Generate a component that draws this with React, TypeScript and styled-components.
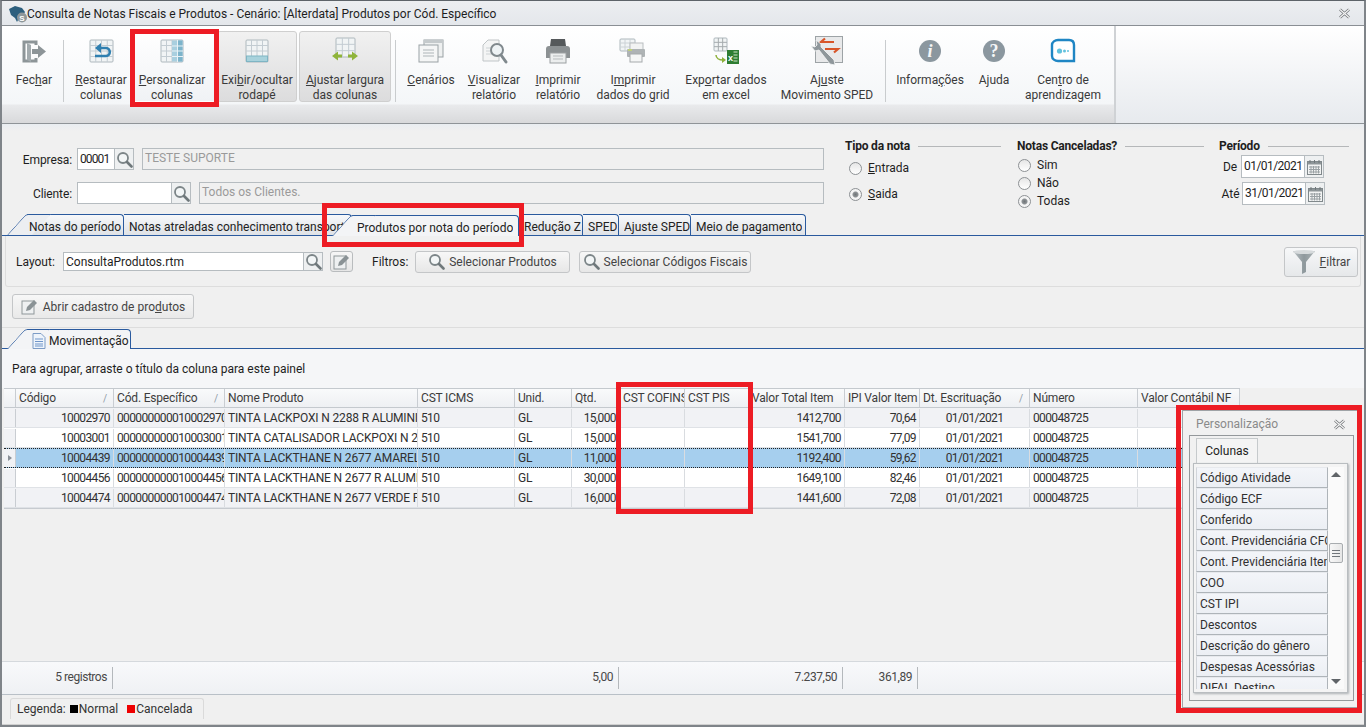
import * as React from 'react';
import styled, { createGlobalStyle } from 'styled-components';

const COLS = '12px 98px 111px 193px 97px 57px 48px 65px 64px 96px 75px 110px 108px 102px';

interface RowData {
    cod: string;
    esp: string;
    nome: string;
    qtd: string;
    total: string;
    ipi: string;
}

const ROWS: RowData[] = [
    { cod: '10002970', esp: '000000000010002970', nome: 'TINTA LACKPOXI N 2288 R ALUMINIO', qtd: '15,000', total: '1412,700', ipi: '70,64' },
    { cod: '10003001', esp: '000000000010003001', nome: 'TINTA CATALISADOR LACKPOXI N 2288', qtd: '15,000', total: '1541,700', ipi: '77,09' },
    { cod: '10004439', esp: '000000000010004439', nome: 'TINTA LACKTHANE N 2677 AMARELO', qtd: '11,000', total: '1192,400', ipi: '59,62' },
    { cod: '10004456', esp: '000000000010004456', nome: 'TINTA LACKTHANE N 2677 R ALUMINIO', qtd: '30,000', total: '1649,100', ipi: '82,46' },
    { cod: '10004474', esp: '000000000010004474', nome: 'TINTA LACKTHANE N 2677 VERDE PINO', qtd: '16,000', total: '1441,600', ipi: '72,08' },
];

const COLUMN_CHOICES = [
    'Código Atividade', 'Código ECF', 'Conferido', 'Cont. Previdenciária CFOP', 'Cont. Previdenciária Item',
    'COO', 'CST IPI', 'Descontos', 'Descrição do gênero', 'Despesas Acessórias', 'DIFAL Destino',
];

/** icons */

const GridLines = ({ x, y, w, h, cols, rows, color = '#c3ccd2' }: { x: number; y: number; w: number; h: number; cols: number; rows: number; color?: string }) => (
    <g stroke={color} strokeWidth="1" fill="none">
        <rect x={x} y={y} width={w} height={h} rx="1" fill="#f1f4f5" stroke="#aeb8bd" />
        {Array.from({ length: cols - 1 }, (_, i) => {
            const lx = x + (w / cols) * (i + 1);
            return <line key={i} x1={lx} y1={y} x2={lx} y2={y + h} />;
        })}
        {Array.from({ length: rows - 1 }, (_, i) => {
            const ly = y + (h / rows) * (i + 1);
            return <line key={i} x1={x} y1={ly} x2={x + w} y2={ly} />;
        })}
    </g>
);

const IconBox = ({ children }: { children: React.ReactNode }) => (
    <svg width="28" height="28" viewBox="0 0 28 28">{children}</svg>
);

const ExitIcon = () => (
    <IconBox>
        <path d="M16 8V5H4v19h12v-3" fill="none" stroke="#8d9598" strokeWidth="3" />
        <path d="M7 6l4 2v17l-4-2z" fill="#a3abae" />
        <path d="M12 12h6V8l8 6.500-8 6.500v-4h-6z" fill="#8d9598" />
    </IconBox>
);

const RestoreIcon = () => (
    <IconBox>
        <GridLines x={3} y={3} w={23} h={22} cols={4} rows={4} />
        <path d="M8 19h11c5 0 5-8 0-8h-7" fill="none" stroke="#2f7fb0" strokeWidth="2.600" />
        <path d="M14 6l-6 5 6 5z" fill="#2f7fb0" />
    </IconBox>
);

const CustomizeIcon = () => (
    <IconBox>
        <GridLines x={3} y={3} w={22} h={22} cols={4} rows={4} />
        <rect x="14" y="3.500" width="10.500" height="21" fill="#a9cfdf" />
        <rect x="19.500" y="3.500" width="5" height="21" fill="#7db4cb" />
        <path d="M14 9h11M14 14h11M14 19.500h11M19.500 3v22" stroke="#e8f2f6" fill="none" />
    </IconBox>
);

const FooterIcon = () => (
    <IconBox>
        <GridLines x={3} y={3} w={22} h={22} cols={4} rows={4} />
        <rect x="3.500" y="19" width="21" height="5.500" fill="#a8d2dc" stroke="#7fb5c4" />
    </IconBox>
);

const FitIcon = () => (
    <IconBox>
        <GridLines x={5} y={1} w={19} h={19} cols={3} rows={3} />
        <path d="M1 19l6-4.500v9zM27 19l-6-4.500v9z" fill="#8fb43a" />
        <path d="M6 17.500h5v3H6zM17 17.500h5v3h-5z" fill="#8fb43a" />
    </IconBox>
);

const ScenarioIcon = () => (
    <IconBox>
        <rect x="7" y="3" width="19" height="17" fill="#eef0f0" stroke="#9aa2a5" />
        <rect x="7" y="3" width="19" height="3" fill="#c5cacc" />
        <rect x="2" y="8" width="19" height="17" fill="#f5f6f6" stroke="#9aa2a5" />
        <path d="M6 13h11M6 16h11M6 19h11" stroke="#aeb5b8" />
    </IconBox>
);

const PreviewIcon = () => (
    <IconBox>
        <path d="M3 8l5-5h11v21H3z" fill="#f4f5f5" stroke="#c0c5c7" />
        <path d="M6 11h7M6 14h6M6 17h7" stroke="#cdd2d4" />
        <circle cx="17" cy="13" r="6" fill="#eef3f5" stroke="#80898d" strokeWidth="2" />
        <path d="M21 18l5 7" stroke="#80898d" strokeWidth="3" strokeLinecap="round" />
    </IconBox>
);

const PrinterIcon = () => (
    <IconBox>
        <path d="M7 2h14l1 7H6z" fill="#55595b" />
        <path d="M2 12c0-2 1-3 3-3h18c2 0 3 1 3 3v9H2z" fill="#8c9193" />
        <rect x="6" y="16" width="16" height="10" fill="#eceeee" stroke="#9ba0a2" />
        <path d="M9 19h10M9 22h10" stroke="#b7bbbd" />
    </IconBox>
);

const PrintGridIcon = () => (
    <IconBox>
        <GridLines x={1} y={2} w={15} h={12} cols={3} rows={3} color="#ccd2d6" />
        <rect x="11" y="6" width="13" height="8" fill="#f2f3f3" stroke="#b9bec0" />
        <rect x="8" y="12" width="18" height="8" rx="1" fill="#aeb3b5" />
        <rect x="11" y="17" width="12" height="8" fill="#f5f6f6" stroke="#a5aaac" />
        <path d="M9 13h4" stroke="#c4d96a" strokeWidth="1.500" />
    </IconBox>
);

const ExcelIcon = () => (
    <IconBox>
        <GridLines x={2} y={1} w={13} h={13} cols={3} rows={3} color="#a5abae" />
        <path d="M4 18c0 3 3 5 7 5" fill="none" stroke="#8db03a" strokeWidth="1.500" />
        <path d="M10 20l4 3-4 3z" fill="#8db03a" />
        <rect x="15" y="13" width="12" height="14" fill="#2e7d32" />
        <path d="M21.500 15h4M21.500 18h4M21.500 21h4M21.500 24h4" stroke="#cfe6c8" />
        <text x="16" y="24" fontSize="9" fontWeight="700" fill="#ffffff" fontFamily="'Liberation Sans', sans-serif">x</text>
    </IconBox>
);

const SpedIcon = () => (
    <svg width="34" height="30" viewBox="0 0 34 30">
        <rect x="5.500" y="0.500" width="27" height="26" fill="#e8e9ea" stroke="#9da3a6" />
        <path d="M16 6h-5l4-3.500M11 6h13M22 13h6l-4 3.500M28 13H15" fill="none" stroke="#d8562a" strokeWidth="2.200" />
        <path d="M1 10l4 5 4-1 11 14 5 1-1-5-13-13 0-3-5-4 1 5-2 2z" fill="#8f979b" stroke="#f4f5f5" strokeWidth="0.800" />
    </svg>
);

const RoundIcon = ({ glyph, italic }: { glyph: string; italic?: boolean }) => (
    <IconBox>
        <circle cx="14" cy="14" r="11" fill="#8b979f" />
        <text x="14" y="20" textAnchor="middle" fontSize="18" fontWeight="700" fontStyle={italic ? 'italic' : 'normal'} fill="#f5f6f7" fontFamily="'Liberation Serif', serif">{glyph}</text>
    </IconBox>
);

const LearnIcon = () => (
    <IconBox>
        <path d="M9 3h11c3 0 5 2 5 5v16H9c-3 0-6-2-6-5V8c0-3 3-5 6-5z" fill="#ffffff" stroke="#1f86c4" strokeWidth="2.400" />
        <circle cx="10.500" cy="14" r="2.600" fill="#62c2de" />
        <circle cx="15.500" cy="14" r="1.500" fill="#62c2de" />
        <circle cx="19" cy="14" r="1" fill="#62c2de" />
    </IconBox>
);

const CloseIcon = () => (
    <svg width="13" height="11" viewBox="0 0 13 11">
        <path d="M2 1.500l9 8M11 1.500l-9 8" stroke="#6a6e71" strokeWidth="2.600" />
        <path d="M2 1.500l9 8M11 1.500l-9 8" stroke="#f4f4f4" strokeWidth="1.300" />
    </svg>
);

const LensIcon = () => (
    <svg width="17" height="17" viewBox="0 0 17 17">
        <circle cx="7" cy="7" r="5" fill="#f3f6f7" stroke="#7c8588" strokeWidth="1.800" />
        <path d="M11 11l4.500 4.500" stroke="#6f787b" strokeWidth="2.600" strokeLinecap="round" />
    </svg>
);

const CalendarIcon = () => (
    <svg width="15" height="16" viewBox="0 0 15 16">
        <rect x="0.500" y="2.500" width="14" height="13" fill="#f2f3f3" stroke="#80888b" />
        <rect x="1" y="3" width="13" height="2.500" fill="#8d9598" />
        <path d="M3 1v3M7.500 1v3M12 1v3" stroke="#70787b" />
        <path d="M2 8h11M2 10.500h11M2 13h11M4 7v7.500M6.500 7v7.500M9 7v7.500M11.500 7v7.500" stroke="#9aa1a4" />
    </svg>
);

const EditIcon = () => (
    <svg width="18" height="17" viewBox="0 0 18 17">
        <rect x="1" y="3" width="12" height="13" fill="#eef0f1" stroke="#8f979a" />
        <path d="M6 9l7-7 3 3-7 7-4 1z" fill="#8a9295" />
    </svg>
);

const FunnelIcon = () => (
    <svg width="24" height="25" viewBox="0 0 24 25">
        <defs>
            <linearGradient id="funnel" x1="0" x2="1" y1="0" y2="0">
                <stop offset="0" stopColor="#b8c0c3" />
                <stop offset="0.5" stopColor="#8e989c" />
                <stop offset="1" stopColor="#aab2b5" />
            </linearGradient>
        </defs>
        <path d="M1 2h22L14 13v10l-4 2V13z" fill="url(#funnel)" />
        <ellipse cx="12" cy="3" rx="11" ry="2" fill="#d6dadc" />
    </svg>
);

const DocIcon = () => (
    <svg width="14" height="16" viewBox="0 0 14 16">
        <path d="M1 .5h8l4 4v11H1z" fill="#eef4fb" stroke="#7d9cc6" />
        <path d="M3 6h8M3 8.500h8M3 11h8M3 13h8" stroke="#6f95c9" />
    </svg>
);

/** page */

export default function App() {
    return (
        <>
            <GlobalStyle />
            <Window>
                <TitleBar>
                    <AppLogo width="22" height="18" viewBox="0 0 22 18">
                        <path d="M1 4l6-3 7 2 3 4-3 5-3 1-2 4-2-4-4-3z" fill="#2d5f7e" />
                        <circle cx="14" cy="12.500" r="5" fill="#8d979b" />
                        <text x="14" y="15.500" textAnchor="middle" fontSize="8" fontWeight="700" fill="#fff" fontFamily="'Liberation Sans', sans-serif">S</text>
                    </AppLogo>
                    <TitleText>Consulta de Notas Fiscais e Produtos - Cenário: [Alterdata] Produtos por Cód. Específico</TitleText>
                    <CloseIcon />
                </TitleBar>

                <Toolbar>
                    <Ribbon>
                        <ToolButton $w={58} $ml={3}><IconSlot><ExitIcon /></IconSlot><span>Fec<u>h</u>ar</span></ToolButton>
                        <ToolSep />
                        <ToolButton $w={58} $ml={8}><IconSlot><RestoreIcon /></IconSlot><span><u>R</u>estaurar</span><span>colunas</span></ToolButton>
                        <ToolButton $w={84} $active><IconSlot><CustomizeIcon /></IconSlot><span><u>P</u>ersonalizar</span><span>colunas</span></ToolButton>
                        <ToolButton $w={80} $ml={3} $pressed><IconSlot><FooterIcon /></IconSlot><span>Exi<u>b</u>ir/ocultar</span><span>rodapé</span></ToolButton>
                        <ToolButton $w={92} $ml={2} $pressed><IconSlot><FitIcon /></IconSlot><span><u>A</u>justar largura</span><span>das colunas</span></ToolButton>
                        <ToolSep $ml={4} />
                        <ToolButton $w={70}><IconSlot><ScenarioIcon /></IconSlot><span><u>C</u>enários</span></ToolButton>
                        <ToolButton $w={56}><IconSlot><PreviewIcon /></IconSlot><span><u>V</u>isualizar</span><span>relatório</span></ToolButton>
                        <ToolButton $w={72}><IconSlot><PrinterIcon /></IconSlot><span><u>I</u>mprimir</span><span>relatório</span></ToolButton>
                        <ToolButton $w={78}><IconSlot><PrintGridIcon /></IconSlot><span>I<u>m</u>primir</span><span>dados do grid</span></ToolButton>
                        <ToolButton $w={108}><IconSlot><ExcelIcon /></IconSlot><span>Exp<u>o</u>rtar dados</span><span>em excel</span></ToolButton>
                        <ToolButton $w={94}><IconSlot><SpedIcon /></IconSlot><span>Aj<u>u</u>ste</span><span>Movimento SPED</span></ToolButton>
                        <ToolSep $ml={11} />
                        <ToolButton $w={88}><IconSlot><RoundIcon glyph="i" italic /></IconSlot><span>Informa<u>ç</u>ões</span></ToolButton>
                        <ToolButton $w={40}><IconSlot><RoundIcon glyph="?" /></IconSlot><span>A<u>j</u>uda</span></ToolButton>
                        <ToolButton $w={98}><IconSlot><LearnIcon /></IconSlot><span>Cen<u>t</u>ro de</span><span>aprendizagem</span></ToolButton>
                    </Ribbon>
                </Toolbar>

                <FilterArea>
                    <ClientColumn>
                        <FieldRow>
                            <FieldLabel>Empresa:</FieldLabel>
                            <TextBox $w={37} $num>00001</TextBox>
                            <Lookup><LensIcon /></Lookup>
                            <ReadOnlyBox>TESTE SUPORTE</ReadOnlyBox>
                        </FieldRow>
                        <FieldRow>
                            <FieldLabel>Cliente:</FieldLabel>
                            <TextBox $w={94} />
                            <Lookup><LensIcon /></Lookup>
                            <ReadOnlyBox>Todos os Clientes.</ReadOnlyBox>
                        </FieldRow>
                    </ClientColumn>

                    <Group $ml={21} $w={156}>
                        <GroupTitle>Tipo da nota<GroupLine /></GroupTitle>
                        <RadioList $top={5} $gap={8} $indent={4}>
                            <Radio><RadioDot /><span><u>E</u>ntrada</span></Radio>
                            <Radio><RadioDot $on /><span><u>S</u>aida</span></Radio>
                        </RadioList>
                    </Group>

                    <Group $ml={16} $w={187}>
                        <GroupTitle>Notas Canceladas?<GroupLine /></GroupTitle>
                        <RadioList $top={2} $gap={0} $indent={1}>
                            <Radio><RadioDot /><span>Sim</span></Radio>
                            <Radio><RadioDot /><span>Não</span></Radio>
                            <Radio><RadioDot $on /><span>Todas</span></Radio>
                        </RadioList>
                    </Group>

                    <Group $ml={15} $w={130}>
                        <GroupTitle>Período<GroupLine /></GroupTitle>
                        <DateList>
                            <DateRow>
                                <DateLabel $w={22}>De</DateLabel>
                                <DateBox>01/01/2021</DateBox>
                                <Lookup $h={23}><CalendarIcon /></Lookup>
                            </DateRow>
                            <DateRow>
                                <DateLabel $w={23}>Até</DateLabel>
                                <DateBox>31/01/2021</DateBox>
                                <Lookup $h={23}><CalendarIcon /></Lookup>
                            </DateRow>
                        </DateList>
                    </Group>
                </FilterArea>

                <TabRow>
                    <Tab $slant $w={97}><span>Notas do período</span></Tab>
                    <Tab $w={228}><span>Notas atreladas conhecimento transporte</span></Tab>
                    <Tab $slant $current $w={167}><span>Produtos por nota do período</span></Tab>
                    <Tab $w={64}><span>Redução Z</span></Tab>
                    <Tab $w={36}><span>SPED</span></Tab>
                    <Tab $w={72}><span>Ajuste SPED</span></Tab>
                    <Tab $w={115}><span>Meio de pagamento</span></Tab>
                </TabRow>

                <LayoutPanel>
                    <LayoutLabel>Layout:</LayoutLabel>
                    <TextBox $w={240} $h={19}>ConsultaProdutos.rtm</TextBox>
                    <Lookup $h={19}><LensIcon /></Lookup>
                    <SmallIconButton><EditIcon /></SmallIconButton>
                    <FiltersLabel>Filtros:</FiltersLabel>
                    <FilterButton $w={155}><LensIcon /><span>Selecionar Produtos</span></FilterButton>
                    <FilterButton $w={172} $ml={9}><LensIcon /><span>Selecionar Códigos Fiscais</span></FilterButton>
                    <ApplyButton><FunnelIcon /><span><u>F</u>iltrar</span></ApplyButton>
                </LayoutPanel>

                <ActionRow>
                    <OpenButton><EditIcon /><span>Abrir cadastro de pro<u>d</u>utos</span></OpenButton>
                </ActionRow>

                <SubTabRow>
                    <Tab $slant $current $w={104} $h={20}><DocIcon /><span>Movimentação</span></Tab>
                </SubTabRow>

                <GroupHint>Para agrupar, arraste o título da coluna para este painel</GroupHint>

                <GridArea>
                    <DataGrid>
                        <GridRow $head>
                            <HeadCell />
                            <HeadCell>Código<SortMark>/</SortMark></HeadCell>
                            <HeadCell>Cód. Específico<SortMark>/</SortMark></HeadCell>
                            <HeadCell>Nome Produto</HeadCell>
                            <HeadCell>CST ICMS</HeadCell>
                            <HeadCell>Unid.</HeadCell>
                            <HeadCell>Qtd.</HeadCell>
                            <HeadCell>CST COFINS</HeadCell>
                            <HeadCell>CST PIS</HeadCell>
                            <HeadCell>Valor Total Item</HeadCell>
                            <HeadCell>IPI Valor Item</HeadCell>
                            <HeadCell>Dt. Escrituação<SortMark>/</SortMark></HeadCell>
                            <HeadCell>Número</HeadCell>
                            <HeadCell>Valor Contábil NF</HeadCell>
                        </GridRow>
                        {ROWS.map((row, i) => (
                            <GridRow key={row.cod} $stripe={i % 2 === 0} $selected={i === 2}>
                                <MarkerCell>{i === 2 && <RowArrow />}</MarkerCell>
                                <NumCell $right>{row.cod}</NumCell>
                                <NumCell>{row.esp}</NumCell>
                                <Cell>{row.nome}</Cell>
                                <NumCell>510</NumCell>
                                <Cell>GL</Cell>
                                <NumCell $right>{row.qtd}</NumCell>
                                <Cell />
                                <Cell />
                                <NumCell $right>{row.total}</NumCell>
                                <NumCell $right>{row.ipi}</NumCell>
                                <NumCell $center>01/01/2021</NumCell>
                                <NumCell>000048725</NumCell>
                                <Cell />
                            </GridRow>
                        ))}
                    </DataGrid>
                </GridArea>

                <FooterBar>
                    <FootCell $w={111}>5 registros</FootCell>
                    <FootCell $w={506}>5,00</FootCell>
                    <FootCell $w={224}>7.237,50</FootCell>
                    <FootCell $w={75}>361,89</FootCell>
                </FooterBar>

                <LegendRow>
                    <LegendTab>
                        Legenda:
                        <LegendSwatch $color="#000000" />Normal
                        <LegendSwatch $color="#ee0000" $ml={9} />Cancelada
                    </LegendTab>
                </LegendRow>

                <FloatPanel>
                    <FloatHead>
                        <span>Personalização</span>
                        <CloseIcon />
                    </FloatHead>
                    <FloatFrame>
                        <FloatTab>Colunas</FloatTab>
                        <FloatBody>
                            <ChoiceList>
                                {COLUMN_CHOICES.map(name => <Choice key={name}>{name}</Choice>)}
                            </ChoiceList>
                            <ScrollBar>
                                <ScrollArrow />
                                <ScrollThumb />
                                <ScrollArrow $down />
                            </ScrollBar>
                        </FloatBody>
                    </FloatFrame>
                </FloatPanel>

                <RedMark $x={130} $y={29} $w={89} $h={78} />
                <RedMark $x={322} $y={203} $w={202} $h={44} />
                <RedMark $x={616} $y={382} $w={137} $h={132} />
                <RedMark $x={1176} $y={405} $w={186} $h={308} />
            </Window>
        </>
    );
}

/** styling */

const GlobalStyle = createGlobalStyle`
    html, body {
        margin: 0;
        padding: 0;
        overflow: hidden;
    }

    body {
        font-family: Roboto, "Noto Sans", sans-serif;
        font-size: 12px;
        color: #1e1e1e;
    }

    u {
        text-underline-offset: 1px;
    }
`;

const Window = styled.div`
    position: relative;
    box-sizing: border-box;
    display: flex;
    flex-direction: column;
    width: 1366px;
    height: 727px;
    overflow: hidden;
    background: #f0f0f0;
    border-top: 1px solid #5d6369;
    border-left: 2px solid #7f8489;
    border-right: 2px solid #7f8489;
    border-bottom: 2px solid #7f8489;
`;

const TitleBar = styled.div`
    display: flex;
    align-items: center;
    flex: none;
    box-sizing: content-box;
    height: 23px;
    padding: 1px 13px 0 6px;
    background: linear-gradient(#eceef1, #e4e7eb);
    border-bottom: 1px solid #8a8f94;
`;

const AppLogo = styled.svg`
    flex: none;
    margin-right: -3px;
`;

const TitleText = styled.div`
    flex: 1;
    white-space: nowrap;
`;

const Toolbar = styled.div`
    flex: none;
    height: 97px;
    background: linear-gradient(#ffffff, #e7eaee);
    border-bottom: 1px solid #8f9498;
`;

const Ribbon = styled.div`
    box-sizing: border-box;
    display: flex;
    align-items: flex-start;
    width: 1114px;
    height: 100%;
    padding-top: 5px;
    border-right: 2px solid #cfd2d5;
    background: linear-gradient(#ffffff 0, #f4f6f8 78px, #e9eaec 79px, #d9dadc 96px);
`;

const ToolButton = styled.div<{ $w: number; $ml?: number; $pressed?: boolean; $active?: boolean }>`
    box-sizing: border-box;
    display: flex;
    flex-direction: column;
    align-items: center;
    flex: none;
    width: ${props => props.$w}px;
    height: 71px;
    margin-left: ${props => props.$ml ?? 0}px;
    line-height: 15px;
    white-space: nowrap;
    color: #3a3a3a;
    border-radius: 3px;
    border: 1px solid ${props => props.$pressed ? '#cfcfcf' : 'transparent'};
    background: ${props => props.$pressed
        ? 'linear-gradient(#f1f1f1, #dcdcdd)'
        : props.$active ? 'linear-gradient(#ffffff, #f0f2f5)' : 'transparent'};
`;

const IconSlot = styled.div`
    display: flex;
    align-items: center;
    justify-content: center;
    height: 28px;
    margin-top: 5px;
    margin-bottom: 8px;
`;

const ToolSep = styled.div<{ $ml?: number }>`
    flex: none;
    width: 1px;
    height: 62px;
    margin: 9px 0 0 ${props => props.$ml ?? 0}px;
    background: #c9ccce;
`;

const FilterArea = styled.div`
    display: flex;
    align-items: flex-start;
    flex: none;
    height: 90px;
    background: linear-gradient(#e9edf1, #f0f0f0 7px);
`;

const ClientColumn = styled.div`
    display: flex;
    flex-direction: column;
    gap: 12px;
    flex: none;
    width: 822px;
    padding-top: 24px;
`;

const FieldRow = styled.div`
    display: flex;
    align-items: center;
`;

const FieldLabel = styled.div`
    width: 70px;
    margin: 2px 5px 0 0;
    text-align: right;
    letter-spacing: -.1px;
`;

const TextBox = styled.div<{ $w: number; $h?: number; $num?: boolean }>`
    box-sizing: border-box;
    flex: none;
    width: ${props => props.$w}px;
    height: ${props => props.$h ?? 22}px;
    padding: 0 2px;
    line-height: ${props => (props.$h ?? 22) - 1}px;
    letter-spacing: ${props => props.$num ? '-.9px' : '0'};
    background: #ffffff;
    border: 1px solid #b6bcc0;
    border-right: none;
    white-space: nowrap;
`;

const Lookup = styled.div<{ $h?: number }>`
    box-sizing: border-box;
    display: flex;
    align-items: center;
    justify-content: center;
    flex: none;
    width: 20px;
    height: ${props => props.$h ?? 22}px;
    background: #eef0f1;
    border: 1px solid #b6bcc0;
`;

const ReadOnlyBox = styled.div`
    box-sizing: border-box;
    flex: 1;
    height: 22px;
    margin-left: 8px;
    padding: 0 2px;
    line-height: 19px;
    color: #9a9a9a;
    background: #f0f0f0;
    border: 1px solid #b6bcc0;
`;

const Group = styled.div<{ $ml: number; $w: number }>`
    flex: none;
    width: ${props => props.$w}px;
    margin: 14px 0 0 ${props => props.$ml}px;
`;

const GroupTitle = styled.div`
    display: flex;
    align-items: center;
    gap: 8px;
    height: 16px;
    font-weight: 700;
    white-space: nowrap;
    letter-spacing: -.2px;
`;

const GroupLine = styled.div`
    flex: 1;
    height: 1px;
    background: #b5b7b9;
`;

const RadioList = styled.div<{ $top: number; $gap: number; $indent: number }>`
    display: flex;
    flex-direction: column;
    gap: ${props => props.$gap}px;
    margin: ${props => props.$top}px 0 0 ${props => props.$indent}px;
`;

const Radio = styled.div`
    display: flex;
    align-items: center;
    gap: 6px;
    height: 18px;
`;

const RadioDot = styled.div<{ $on?: boolean }>`
    box-sizing: border-box;
    flex: none;
    width: 13px;
    height: 13px;
    border-radius: 50%;
    border: 1px solid #8d9194;
    background: ${props => props.$on
        ? 'radial-gradient(circle, #6f7477 0, #8f9396 2.500px, #f4f4f4 3.500px)'
        : 'linear-gradient(#e6e6e6, #ffffff)'};
`;

const DateList = styled.div`
    display: flex;
    flex-direction: column;
    gap: 4px;
    margin-top: 1px;
`;

const DateRow = styled.div`
    display: flex;
    align-items: center;
`;

const DateLabel = styled.div<{ $w: number }>`
    width: ${props => props.$w}px;
    text-align: center;
`;

const DateBox = styled.div`
    box-sizing: border-box;
    flex: none;
    width: 63px;
    height: 23px;
    padding: 0 2px;
    line-height: 20px;
    letter-spacing: -.55px;
    background: #ffffff;
    border: 1px solid #b6bcc0;
    border-right: none;
`;

const TabRow = styled.div`
    display: flex;
    align-items: flex-end;
    flex: none;
    box-sizing: border-box;
    height: 22px;
    padding-left: 25px;
    border-bottom: 1px solid #2a5a9e;
`;

const SubTabRow = styled(TabRow)`
    height: 21px;
`;

const Tab = styled.div<{ $slant?: boolean; $current?: boolean; $w?: number; $h?: number }>`
    position: relative;
    box-sizing: border-box;
    display: flex;
    align-items: center;
    gap: 3px;
    flex: none;
    width: ${props => props.$w ?? 100}px;
    height: ${props => props.$h ?? 21}px;
    margin-bottom: ${props => props.$current ? -1 : 0}px;
    padding: 3px 0 0 ${props => props.$slant && !props.$current ? 2 : 5}px;
    white-space: nowrap;
    color: #222222;
    border-top: 1px solid #2a5a9e;
    border-right: 1px solid #2a5a9e;
    border-top-right-radius: 4px;
    z-index: ${props => props.$current ? 2 : 1};
    background: ${props => props.$current ? '#f3f4f6' : 'linear-gradient(#f7f8fa, #dfe2e6)'};

    & > span {
        display: block;
        overflow: hidden;
    }

    ${props => props.$slant && `
        &::before {
            content: '';
            position: absolute;
            top: -1px;
            bottom: 0;
            left: -20px;
            width: 24px;
            z-index: -1;
            border-top: 1px solid #2a5a9e;
            border-left: 1px solid #2a5a9e;
            border-top-left-radius: 3px;
            transform: skewX(-42deg);
            transform-origin: bottom left;
            background: ${props.$current ? '#f3f4f6' : '#eceef1'};
        }
    `}
`;

const LayoutPanel = styled.div`
    box-sizing: border-box;
    display: flex;
    align-items: center;
    flex: none;
    height: 51px;
    margin: 0 3px 0 3px;
    padding: 1px 2px 0 10px;
    border: 1px solid #dddddd;
    border-top: none;
    border-radius: 0 0 3px 3px;
`;

const LayoutLabel = styled.div`
    width: 47px;
`;

const SmallIconButton = styled.div`
    box-sizing: border-box;
    display: flex;
    align-items: center;
    justify-content: center;
    flex: none;
    width: 23px;
    height: 21px;
    margin-left: 7px;
    background: linear-gradient(#f6f6f6, #e6e6e6);
    border: 1px solid #b9bcbe;
    border-radius: 3px;
`;

const FiltersLabel = styled.div`
    width: 43px;
    margin-left: 19px;
`;

const FilterButton = styled.div<{ $w: number; $ml?: number }>`
    box-sizing: border-box;
    display: flex;
    align-items: center;
    justify-content: center;
    gap: 4px;
    flex: none;
    width: ${props => props.$w}px;
    height: 22px;
    margin-left: ${props => props.$ml ?? 0}px;
    white-space: nowrap;
    color: #444444;
    background: linear-gradient(#f7f7f7, #e7e7e7);
    border: 1px solid #c4c6c8;
    border-radius: 3px;
`;

const ApplyButton = styled.div`
    box-sizing: border-box;
    display: flex;
    align-items: center;
    justify-content: center;
    gap: 4px;
    flex: none;
    width: 74px;
    height: 30px;
    margin-left: auto;
    color: #444444;
    background: linear-gradient(#f7f8f9, #e6e8ea);
    border: 1px solid #c4c6c8;
    border-radius: 3px;
`;

const ActionRow = styled.div`
    flex: none;
    height: 33px;
    padding: 7px 0 0 10px;
    border-bottom: 1px solid #dddddd;
`;

const OpenButton = styled.div`
    box-sizing: border-box;
    display: flex;
    align-items: center;
    justify-content: center;
    gap: 4px;
    width: 182px;
    height: 25px;
    white-space: nowrap;
    color: #444444;
    background: linear-gradient(#f7f7f7, #e9e9e9);
    border: 1px solid #c4c6c8;
    border-radius: 3px;
`;

const GroupHint = styled.div`
    flex: none;
    height: 39px;
    padding: 0 0 0 10px;
    line-height: 40px;
    background: #f5f6f8;
`;

const GridArea = styled.div`
    flex: 1;
    min-height: 0;
    padding-left: 2px;
`;

const DataGrid = styled.div`
    width: 1236px;
    border-bottom: 1px solid #c7cbd0;
`;

const GridRow = styled.div<{ $head?: boolean; $stripe?: boolean; $selected?: boolean }>`
    box-sizing: border-box;
    display: grid;
    grid-template-columns: ${COLS};
    height: 20px;
    border-top: 1px solid ${props => props.$head ? '#c4c9ce' : 'transparent'};
    border-bottom: ${props => props.$head ? '1px solid #c4c9ce' : '1px solid #dfe2e6'};
    background: ${props => {
        if (props.$head) return 'linear-gradient(#f9fafb, #eef0f3)';
        if (props.$selected) return '#a6cfee';
        return props.$stripe ? '#f1f2f5' : '#ffffff';
    }};
    ${props => props.$selected && `
        border-top: 1px dotted #222222;
        border-bottom: 1px dotted #222222;
    `}
`;

const HeadCell = styled.div`
    display: flex;
    justify-content: space-between;
    align-items: center;
    padding: 0 3px;
    overflow: hidden;
    white-space: nowrap;
    color: #3c3c3c;
    letter-spacing: -.18px;
    border-right: 1px solid #c9cdd2;
`;

const SortMark = styled.span`
    margin-right: 3px;
    font-size: 10px;
    color: #8f9aa5;
`;

const Cell = styled.div<{ $right?: boolean; $center?: boolean }>`
    padding: 0 3px;
    overflow: hidden;
    display: flex;
    align-items: center;
    justify-content: ${props => props.$right ? 'flex-end' : props.$center ? 'center' : 'flex-start'};
    white-space: nowrap;
    line-height: 18px;
    color: #303030;
    letter-spacing: -.15px;
    border-right: 1px solid #d9dce0;
`;

const NumCell = styled(Cell)`
    letter-spacing: -.62px;
`;

const MarkerCell = styled.div`
    display: flex;
    align-items: center;
    justify-content: center;
    background: #f1f2f5;
    border-right: 1px solid #c9cdd2;
`;

const RowArrow = styled.div`
    width: 0;
    height: 0;
    border-left: 4px solid #8a9097;
    border-top: 3px solid transparent;
    border-bottom: 3px solid transparent;
`;

const FooterBar = styled.div`
    box-sizing: border-box;
    display: flex;
    flex: none;
    height: 34px;
    padding: 5px 0;
    background: linear-gradient(#f8f9fb, #eff1f4);
    border-top: 1px solid #d5d9dd;
    border-bottom: 1px solid #b9c0c7;
`;

const FootCell = styled.div<{ $w: number }>`
    box-sizing: border-box;
    flex: none;
    width: ${props => props.$w}px;
    padding-right: 5px;
    text-align: right;
    line-height: 21px;
    color: #484848;
    letter-spacing: -.45px;
    border-right: 1px solid #b4b8bc;
`;

const LegendRow = styled.div`
    flex: none;
    box-sizing: border-box;
    height: 30px;
    padding: 3px 0 0 8px;
    border-bottom: 1px solid #d0d0d0;
`;

const LegendTab = styled.div`
    box-sizing: border-box;
    display: flex;
    align-items: center;
    width: 194px;
    height: 21px;
    padding-left: 6px;
    color: #333333;
    white-space: nowrap;
    border: 1px solid #dadada;
    border-bottom: none;
    border-radius: 3px 3px 0 0;
`;

const LegendSwatch = styled.span<{ $color: string; $ml?: number }>`
    width: 8px;
    height: 8px;
    margin: 0 1px 0 ${props => props.$ml ?? 4}px;
    background: ${props => props.$color};
`;

const FloatPanel = styled.div`
    position: absolute;
    top: 409px;
    left: 1180px;
    box-sizing: border-box;
    width: 178px;
    height: 298px;
    padding: 0 5px 3px 6px;
    background: #f1f1f1;
    border: 1px solid #9fa3a6;
    z-index: 5;
`;

const FloatHead = styled.div`
    display: flex;
    align-items: center;
    justify-content: space-between;
    height: 24px;
    padding: 2px 8px 0 7px;
    box-sizing: border-box;
    color: #8a8a8a;
`;

const FloatFrame = styled.div`
    box-sizing: border-box;
    height: 266px;
    padding: 2px 5px 0 3px;
    background: #f1f1f1;
    border: 1px solid #94989b;
`;

const FloatTab = styled.div`
    box-sizing: border-box;
    width: 62px;
    height: 25px;
    margin-left: 3px;
    line-height: 25px;
    text-align: center;
    background: #f4f4f4;
    border: 1px solid #c6cacc;
    border-bottom: none;
`;

const FloatBody = styled.div`
    box-sizing: border-box;
    display: flex;
    height: 230px;
    padding: 3px 3px 3px 2px;
    background: #f4f4f4;
    border: 1px solid #b9bdc0;
    box-shadow: 1px 1px 2px #aeb2b5;
`;

const ChoiceList = styled.div`
    flex: none;
    width: 132px;
    height: 100%;
    overflow: hidden;
`;

const Choice = styled.div`
    box-sizing: border-box;
    height: 21px;
    padding: 0 3px;
    line-height: 20px;
    overflow: hidden;
    white-space: nowrap;
    color: #303030;
    background: linear-gradient(#f3f5f9, #eceff4);
    border: 1px solid #aeb4b9;
    border-top-color: #e7e9ed;
    border-left-color: #d2d5da;
`;

const ScrollBar = styled.div`
    display: flex;
    flex-direction: column;
    align-items: center;
    justify-content: space-between;
    flex: 1;
    padding: 5px 0;
    background: #fafafa;
`;

const ScrollArrow = styled.div<{ $down?: boolean }>`
    width: 0;
    height: 0;
    border-left: 5px solid transparent;
    border-right: 5px solid transparent;
    ${props => props.$down ? 'border-top: 5px solid #606468;' : 'border-bottom: 5px solid #606468;'}
`;

const ScrollThumb = styled.div`
    box-sizing: border-box;
    width: 14px;
    height: 20px;
    margin-top: -50px;
    background:
        repeating-linear-gradient(#70757a 0 1px, transparent 1px 3px) center / 8px 7px no-repeat,
        linear-gradient(90deg, #f7f7f7, #e6e6e6);
    border: 1px solid #a8acaf;
    border-radius: 2px;
`;

const RedMark = styled.div<{ $x: number; $y: number; $w: number; $h: number }>`
    position: absolute;
    top: ${props => props.$y - 1}px;
    left: ${props => props.$x - 2}px;
    box-sizing: border-box;
    width: ${props => props.$w}px;
    height: ${props => props.$h}px;
    border: 5px solid #ed1c24;
    z-index: 10;
`;
